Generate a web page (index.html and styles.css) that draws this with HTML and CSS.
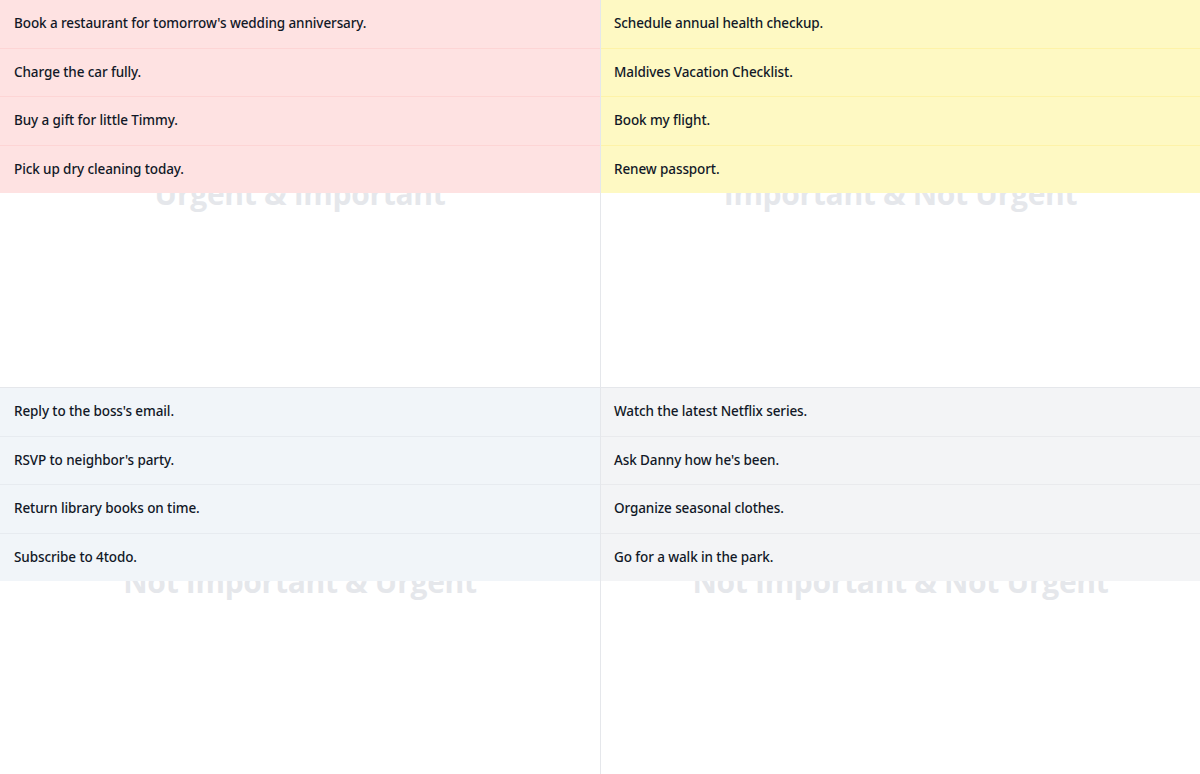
FILE: index.html
```html
<!DOCTYPE html>
<html lang="en">
<head>
  <meta charset="UTF-8">
  <meta name="viewport" content="width=device-width, initial-scale=1.0">
  <title>4todo</title>
  <link rel="stylesheet" href="styles.css">
</head>
<body>
  <div class="matrix">
    <section class="quadrant q-red">
      <h2 class="label">Urgent &amp; Important</h2>
      <ul class="tasks">
        <li>Book a restaurant for tomorrow's wedding anniversary.</li>
        <li>Charge the car fully.</li>
        <li>Buy a gift for little Timmy.</li>
        <li>Pick up dry cleaning today.</li>
      </ul>
    </section>
    <section class="quadrant q-yellow">
      <h2 class="label">Important &amp; Not Urgent</h2>
      <ul class="tasks">
        <li>Schedule annual health checkup.</li>
        <li>Maldives Vacation Checklist.</li>
        <li>Book my flight.</li>
        <li>Renew passport.</li>
      </ul>
    </section>
    <section class="quadrant q-slate">
      <h2 class="label">Not Important &amp; Urgent</h2>
      <ul class="tasks">
        <li>Reply to the boss's email.</li>
        <li>RSVP to neighbor's party.</li>
        <li>Return library books on time.</li>
        <li>Subscribe to 4todo.</li>
      </ul>
    </section>
    <section class="quadrant q-gray">
      <h2 class="label">Not Important &amp; Not Urgent</h2>
      <ul class="tasks">
        <li>Watch the latest Netflix series.</li>
        <li>Ask Danny how he's been.</li>
        <li>Organize seasonal clothes.</li>
        <li>Go for a walk in the park.</li>
      </ul>
    </section>
  </div>
</body>
</html>
```

FILE: styles.css
```css
body {
  margin: 0;
  font-family: "Noto Sans", "Open Sans", sans-serif;
  color: #111827;
  background: #fff;
}
.matrix {
  display: grid;
  grid-template-columns: 601px 1fr;
  grid-template-rows: 388px 1fr;
  height: 774px;
}
.quadrant {
  position: relative;
  display: flex;
  align-items: center;
  justify-content: center;
  overflow: hidden;
  box-sizing: border-box;
}
.q-red, .q-slate {
  border-right: 1px solid #e5e7eb;
}
.q-red, .q-yellow {
  border-bottom: 1px solid #e5e7eb;
}
.label {
  margin: 0;
  font-family: "Open Sans", sans-serif;
  font-size: 30px;
  font-weight: 700;
  color: #e5e7eb;
  letter-spacing: -0.3px;
}
.tasks {
  position: absolute;
  top: 0;
  left: 0;
  right: 0;
  margin: 0;
  padding: 0;
  list-style: none;
}
.tasks li {
  padding: 12px 14px;
  font-size: 13.5px;
  font-weight: 500;
  line-height: 23.5px;
  letter-spacing: -0.1px;
}
.q-yellow .tasks li, .q-gray .tasks li {
  padding-left: 13px;
}
.tasks li + li {
  border-top-width: 1px;
  border-top-style: solid;
}
.q-red li { background: #fee2e2; border-top-color: #fdd5d5; }
.q-yellow li { background: #fef9c3; border-top-color: #fef3a8; }
.q-slate li { background: #f1f5f9; border-top-color: #e7ebf0; }
.q-gray li { background: #f3f4f6; border-top-color: #e9eaed; }
```
